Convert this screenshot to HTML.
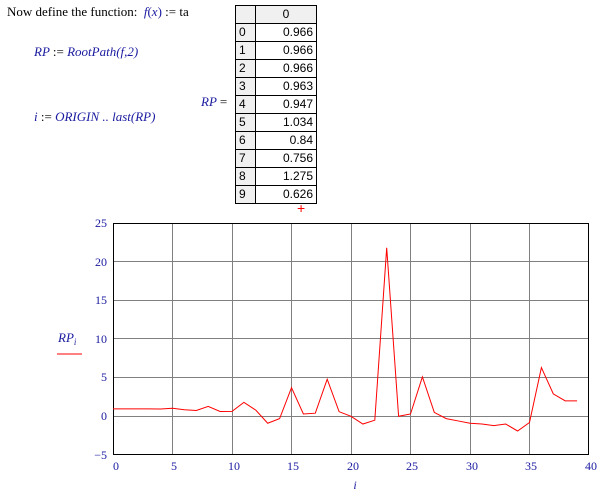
<!DOCTYPE html><html><head><style>
body{margin:0;width:611px;height:498px;background:#fff;position:relative;font-family:"Liberation Serif",serif;overflow:hidden}
.a{position:absolute;white-space:nowrap}
.m{color:#1a1aa0;font-style:italic;font-size:13px}
table{position:absolute;left:235px;top:5px;border-collapse:collapse;font-family:"Liberation Sans",sans-serif;font-size:12px}
td{border:1px solid #000;height:17px;padding:0 3px;line-height:17px}
td.i{background:#f0f0f0;width:13px}
td.v{width:54px;text-align:right}
</style></head><body>
<div class="a" style="left:7px;top:4px;font-size:13px">Now define the function: &nbsp;<span class="m">f</span><span style="color:#1a1aa0">(<i>x</i>)</span> := ta</div>
<div class="a m" style="left:34px;top:44px">RP <span style="font-style:normal;color:#000">:=</span> RootPath(f,2)</div>
<div class="a m" style="left:34px;top:109px">i <span style="font-style:normal;color:#000">:=</span> ORIGIN .. last(RP)</div>
<div class="a m" style="left:201px;top:94px">RP <span style="font-style:normal;color:#000">=</span></div>
<table>
<tr><td class="i"></td><td style="text-align:center;background:#f0f0f0">0</td></tr>
<tr><td class="i">0</td><td class="v">0.966</td></tr>
<tr><td class="i">1</td><td class="v">0.966</td></tr>
<tr><td class="i">2</td><td class="v">0.966</td></tr>
<tr><td class="i">3</td><td class="v">0.963</td></tr>
<tr><td class="i">4</td><td class="v">0.947</td></tr>
<tr><td class="i">5</td><td class="v">1.034</td></tr>
<tr><td class="i">6</td><td class="v">0.84</td></tr>
<tr><td class="i">7</td><td class="v">0.756</td></tr>
<tr><td class="i">8</td><td class="v">1.275</td></tr>
<tr><td class="i">9</td><td class="v">0.626</td></tr>
</table>
<div class="a" style="left:297px;top:200px;color:red;font-size:14px;font-family:'Liberation Sans'">+</div>
<svg class="a" style="left:0;top:0" width="611" height="498">
<g stroke="#808080" stroke-width="1">
<line x1="172.5" y1="223" x2="172.5" y2="455"/><line x1="232.5" y1="223" x2="232.5" y2="455"/><line x1="291.5" y1="223" x2="291.5" y2="455"/><line x1="351.5" y1="223" x2="351.5" y2="455"/><line x1="410.5" y1="223" x2="410.5" y2="455"/><line x1="470.5" y1="223" x2="470.5" y2="455"/><line x1="529.5" y1="223" x2="529.5" y2="455"/>
<line x1="113" y1="261.5" x2="589" y2="261.5"/><line x1="113" y1="300.5" x2="589" y2="300.5"/><line x1="113" y1="338.5" x2="589" y2="338.5"/><line x1="113" y1="377.5" x2="589" y2="377.5"/><line x1="113" y1="416.5" x2="589" y2="416.5"/>
</g>
<rect x="113.5" y="223.5" width="475" height="231" fill="none" stroke="#000"/>
<g transform="translate(113,416.3) scale(11.9,-7.73)">
<polyline vector-effect="non-scaling-stroke" fill="none" stroke="red" stroke-width="1" points="0,.966 1,.966 2,.966 3,.963 4,.947 5,1.034 6,.84 7,.756 8,1.275 9,.626 10,.63 11,1.8 12,.8 13,-.9 14,-.3 15,3.7 16,.3 17,.4 18,4.8 19,.6 20,0 21,-1 22,-.5 23,21.8 24,0 25,.3 26,5.1 27,.5 28,-.3 29,-.6 30,-.9 31,-1 32,-1.2 33,-1 34,-1.9 35,-.8 36,6.3 37,2.9 38,2 39,2"/>
</g>
<g font-family="Liberation Serif" font-size="12" fill="#1a1aa0" text-anchor="end">
<text x="107" y="227">25</text><text x="107" y="266">20</text><text x="107" y="304">15</text><text x="107" y="343">10</text><text x="107" y="381">5</text><text x="107" y="420">0</text><text x="107" y="459">−5</text>
</g>
<g font-family="Liberation Serif" font-size="12" fill="#1a1aa0" text-anchor="middle">
<text x="116" y="470">0</text><text x="174" y="470">5</text><text x="234" y="470">10</text><text x="293" y="470">15</text><text x="353" y="470">20</text><text x="412" y="470">25</text><text x="472" y="470">30</text><text x="531" y="470">35</text><text x="591" y="470">40</text>
<text x="355" y="489" font-style="italic">i</text>
</g>
<text x="58" y="342" font-family="Liberation Serif" font-size="13" font-style="italic" fill="#1a1aa0">RP<tspan font-size="9" dy="3">i</tspan></text>
<line x1="57" y1="354" x2="82" y2="354" stroke="red"/>
</svg>
</body></html>
